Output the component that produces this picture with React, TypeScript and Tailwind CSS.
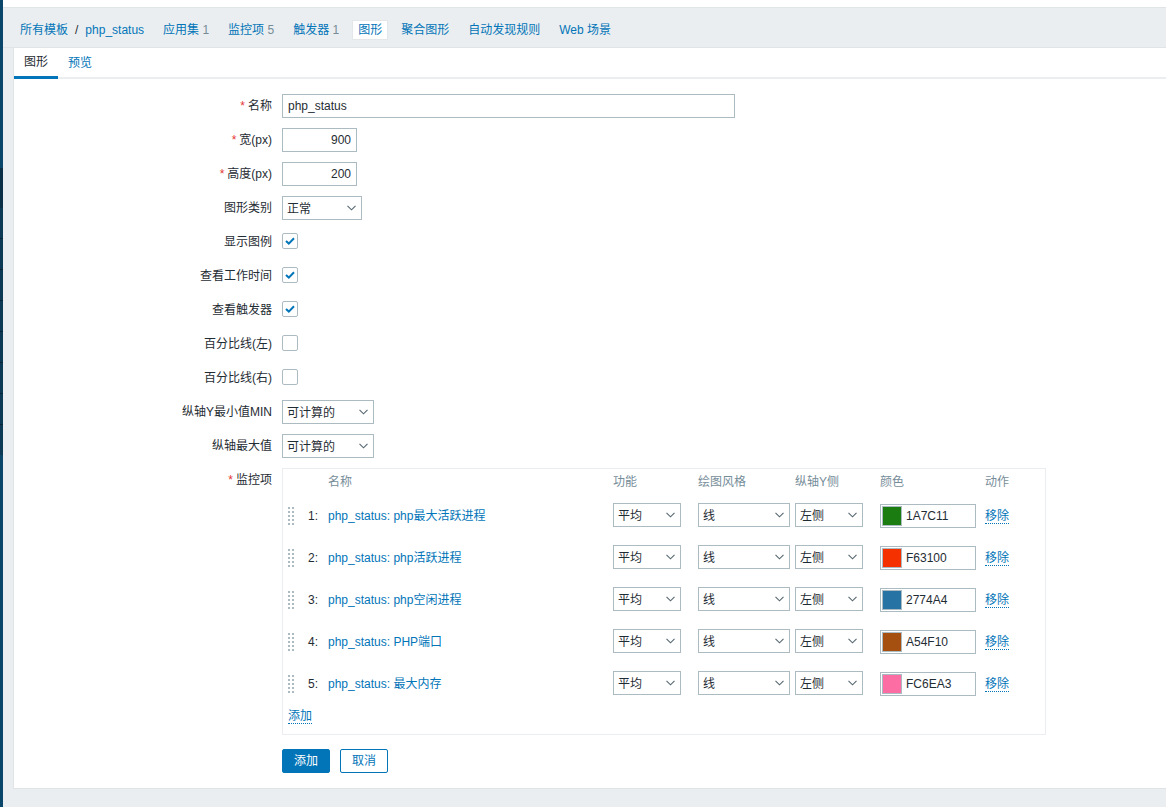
import React from 'react';

const FONT = "font-['Liberation_Sans','Noto_Sans_CJK_SC',sans-serif]";

const navItems = [
  { label: '应用集', count: 1 },
  { label: '监控项', count: 5 },
  { label: '触发器', count: 1 },
  { label: '图形', active: true },
  { label: '聚合图形' },
  { label: '自动发现规则' },
  { label: 'Web 场景' },
];

const items = [
  { n: 1, name: 'php_status: php最大活跃进程', hex: '1A7C11', swatch: 'bg-[#1a7c11]' },
  { n: 2, name: 'php_status: php活跃进程', hex: 'F63100', swatch: 'bg-[#f63100]' },
  { n: 3, name: 'php_status: php空闲进程', hex: '2774A4', swatch: 'bg-[#2774a4]' },
  { n: 4, name: 'php_status: PHP端口', hex: 'A54F10', swatch: 'bg-[#a54f10]' },
  { n: 5, name: 'php_status: 最大内存', hex: 'FC6EA3', swatch: 'bg-[#fc6ea3]' },
];

const Select = ({ value, className }: { value: string; className: string }) => (
  <div className={`relative h-6 ${className}`}>
    <select
      defaultValue={value}
      className="w-full h-full appearance-none bg-white border border-[#acbbc2] pl-[4px] pr-4 pt-[2px] text-xs text-[#1f2c33] rounded-none outline-none"
    >
      <option>{value}</option>
    </select>
    <svg className="absolute right-[6px] top-[9px] w-[9px] h-[6px] pointer-events-none" viewBox="0 0 9 6" fill="none">
      <path d="M0.5 0.8L4.5 4.8L8.5 0.8" stroke="#55666f" strokeWidth="1.1" />
    </svg>
  </div>
);

const Check = ({ on }: { on?: boolean }) => (
  <div className="w-4 h-4 mb-[2px] bg-white border border-[#acbbc2] rounded-[2px] flex items-center justify-center">
    {on && (
      <svg className="w-[10px] h-2" viewBox="0 0 10 8" fill="none">
        <path d="M1 4L3.8 6.6L9 1.2" stroke="#0275b8" strokeWidth="2" />
      </svg>
    )}
  </div>
);

const Row = ({ label, required, children }: { label: string; required?: boolean; children: React.ReactNode }) => (
  <div className="flex items-center h-6 gap-[10px]">
    <label className="w-[258px] text-right text-xs text-[#1f2c33]">
      {required && <span className="text-[#e33734] mr-[3px]">*</span>}
      {label}
    </label>
    {children}
  </div>
);

const TextInput = ({ value, className }: { value: string; className: string }) => (
  <input
    readOnly
    value={value}
    className={`h-6 bg-white border border-[#acbbc2] px-[5px] text-xs text-[#1f2c33] outline-none ${className}`}
  />
);

const Grip = () => (
  <div className="grid grid-cols-2 gap-x-[2px] gap-y-[2px] w-[6px]">
    {Array.from({ length: 10 }).map((_, i) => (
      <span key={i} className="w-[2px] h-[2px] bg-[#acbbc2]" />
    ))}
  </div>
);

const Sidebar = () => (
  <div className="w-[3px] shrink-0 flex flex-col bg-[#0a466a]">
    <div className="h-[168px]" />
    <div className="h-[40px] bg-[#0a3048]" />
    {[0, 1, 2, 3, 4, 5, 6].map((i) => (
      <div key={i} className="h-[31px] bg-[#0c3a56] border-b border-[#082537]" />
    ))}
    <div className="h-[30px] bg-[#0c3a56]" />
  </div>
);

export default function App() {
  return (
    <div className={`h-screen overflow-hidden flex bg-white ${FONT}`}>
      <Sidebar />
      <div className="flex-1 min-w-0 flex flex-col bg-[#ebeef0]">
        <div className="h-[8px] bg-white border-b border-[#dfe4e7] shrink-0" />

        {/* Template navigation */}
        <nav className="h-[40px] shrink-0 flex items-start pt-[12px] pl-[17px] gap-[7px] text-xs text-[#0275b8] border-b border-[#dfe4e7]">
          <div className="h-[20px] flex items-center">
            <span>所有模板</span>
            <span className="mx-[7px] text-[#1f2c33]">/</span>
            <span>php_status</span>
            <span className="w-[6px]" />
          </div>
          {navItems.map((item) => (
            <div
              key={item.label}
              className={`h-[20px] px-[6px] flex items-center ${item.active ? 'bg-white outline outline-1 -outline-offset-1 outline-[#e3e7ea]' : ''}`}
            >
              {item.label}
              {item.count !== undefined && <span className="ml-[3.33px] text-[#768d99]">{item.count}</span>}
            </div>
          ))}
        </nav>

        {/* Form card */}
        <div className="flex-1 ml-[10px] mb-[18px] bg-white border-l border-b border-[#dfe4e7] flex flex-col min-h-0">
          <div className="h-[31px] shrink-0 flex text-xs border-b-2 border-[#ebeef0]">
            <div className="h-[31px] w-11 flex items-center justify-center text-[#1f2c33] border-b-[3px] border-[#0275b8]">图形</div>
            <div className="h-[29px] px-[10px] flex items-center text-[#0275b8]">预览</div>
          </div>

          <div className="pt-[15px] flex flex-col gap-[10px]">
            <Row label="名称" required><TextInput value="php_status" className="w-[453px]" /></Row>
            <Row label="宽(px)" required><TextInput value="900" className="w-[75px] text-right" /></Row>
            <Row label="高度(px)" required><TextInput value="200" className="w-[75px] text-right" /></Row>
            <Row label="图形类别"><Select value="正常" className="w-20" /></Row>
            <Row label="显示图例"><Check on /></Row>
            <Row label="查看工作时间"><Check on /></Row>
            <Row label="查看触发器"><Check on /></Row>
            <Row label="百分比线(左)"><Check /></Row>
            <Row label="百分比线(右)"><Check /></Row>
            <Row label="纵轴Y最小值MIN"><Select value="可计算的" className="w-[92px]" /></Row>
            <Row label="纵轴最大值"><Select value="可计算的" className="w-[92px]" /></Row>

            {/* Items table */}
            <div className="flex items-start gap-[10px]">
              <label className="w-[258px] pt-[4px] text-right text-xs text-[#1f2c33]">
                <span className="text-[#e33734] mr-[3px]">*</span>监控项
              </label>
              <div className="w-[764px] h-[267px] border border-[#ebeef0] text-xs">
                <div className="h-[26px] grid grid-cols-[45px_285px_85px_97px_85px_105px_1fr] items-center text-[#768d99]">
                  <span />
                  <span>名称</span>
                  <span>功能</span>
                  <span>绘图风格</span>
                  <span>纵轴Y侧</span>
                  <span>颜色</span>
                  <span>动作</span>
                </div>
                {items.map((it) => (
                  <div key={it.n} className="h-[42px] grid grid-cols-[45px_285px_85px_97px_85px_105px_1fr] items-center">
                    <div className="flex items-center pl-[5px] pr-[10px] justify-between">
                      <Grip />
                      <span className="text-[#1f2c33]">{it.n}:</span>
                    </div>
                    <a className="text-[#0275b8]">{it.name}</a>
                    <Select value="平均" className="w-[68px] mb-[2px]" />
                    <Select value="线" className="w-[92px] mb-[2px]" />
                    <Select value="左侧" className="w-[68px] mb-[2px]" />
                    <div className="w-[96px] h-6 border border-[#acbbc2] flex items-center pl-[1px] gap-[4px] text-[#1f2c33]">
                      <span className={`w-[20px] h-[20px] border border-[#acbbc2] ${it.swatch}`} />
                      <span>{it.hex}</span>
                    </div>
                    <a className="justify-self-start text-[#0275b8] border-b border-dotted border-[#0275b8] leading-[14px]">移除</a>
                  </div>
                ))}
                <div className="pl-[5px] pt-[3px]">
                  <a className="text-[#0275b8] border-b border-dotted border-[#0275b8] leading-[14px] inline-block">添加</a>
                </div>
              </div>
            </div>

            <div className="flex gap-[10px] pl-[268px] mt-[4px]">
              <button className="w-12 h-6 bg-[#0275b8] text-white text-xs rounded-[2px] border border-[#0275b8]">添加</button>
              <button className="w-12 h-6 bg-white text-[#0275b8] text-xs rounded-[2px] border border-[#0275b8]">取消</button>
            </div>
          </div>
        </div>
      </div>
    </div>
  );
}
